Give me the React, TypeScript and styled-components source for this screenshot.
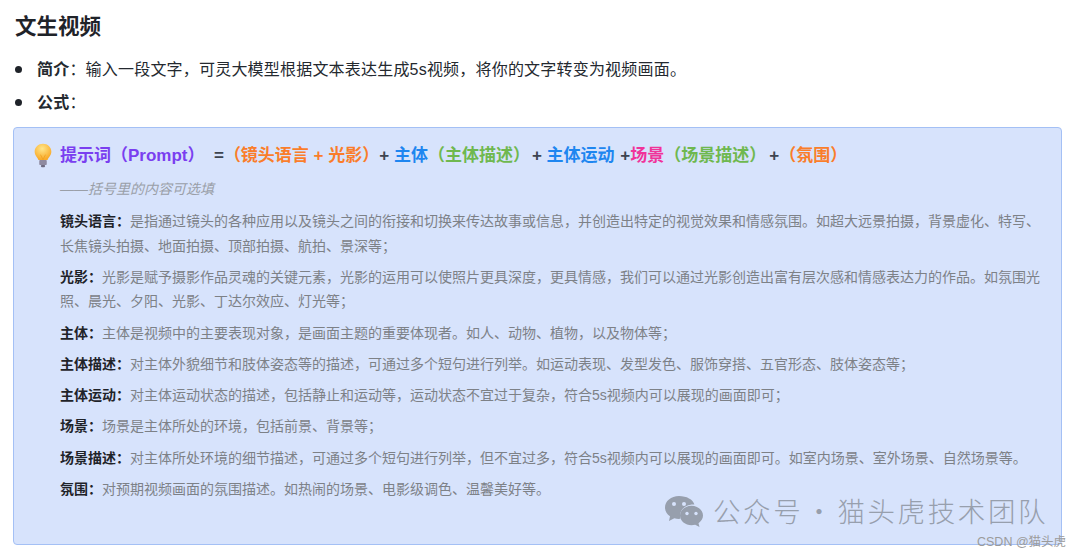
import React from "react";
import styled, { createGlobalStyle } from "styled-components";

const Global = createGlobalStyle`
  html, body { margin: 0; padding: 0; background: #fff; }
  body { font-family: "Liberation Sans", "Noto Sans CJK SC", sans-serif; overflow: hidden; }
`;
const Page = styled.div`
  position: relative; width: 1080px; height: 555px; overflow: hidden; padding: 13px 18px 0 13px; box-sizing: border-box;
`;
const Title = styled.h2`
  margin: 0 0 0 2px; font-size: 21.500px; line-height: 28px; font-weight: 700; color: #1f2329;
`;
const List = styled.ul`
  margin: 12px 0 0; padding: 0; list-style: none;
`;
const Item = styled.li`
  position: relative; padding-left: 24px; font-size: 16px; line-height: 33px; height: 33px; color: #24292f; letter-spacing: 0.2px;
  &::before { content: ""; position: absolute; left: 2px; top: 13px; width: 7px; height: 7px; border-radius: 50%; background: #1f2329; }
  b { font-weight: 700; }
`;
const Callout = styled.section`
  margin-top: 8px; width: 1049px; height: 418px; box-sizing: border-box; background: #d7e3fc; border: 1px solid #a4c0f5; border-radius: 4px;
  padding: 16px 20px 0 46px; position: relative;
`;
const Bulb = styled.svg`
  position: absolute; left: 19px; top: 15px;
`;
const Formula = styled.div`
  font-size: 17px; font-weight: 700; line-height: 24px; color: #3d4450; white-space: pre;
`;
const Tone = styled.span<{ $c: string }>`
  color: ${(p) => p.$c};
`;
const Plus = styled.span<{ $l: number }>`
  margin-left: ${(p) => p.$l}px;
`;
const Note = styled.div`
  margin-top: 10px; font-size: 14px; line-height: 22px; font-style: italic; color: #9a9fa8;
`;
const Para = styled.p`
  margin: 6.800px 0 0; font-size: 14px; line-height: 24.500px; color: #7d8187;
  b { color: #1f2329; font-weight: 700; }
`;
const Lead = styled(Para)`
  margin-top: 9px;
`;
const Mark = styled.div`
  position: absolute; left: 664px; top: 494px; display: flex; align-items: center; gap: 9px;
  font-size: 27.500px; line-height: 36px; letter-spacing: 2.600px; color: #979fad; font-family: "Noto Sans CJK SC", sans-serif; font-weight: 300; white-space: pre;
`;
const MarkText = styled.span`
  position: relative; top: -2px;
`;
const Dot = styled.span`
  margin: 0 2px;
`;
const Credit = styled.div`
  position: absolute; left: 977px; top: 535px; font-size: 12.500px; line-height: 15px; color: #9b9b9b; white-space: pre;
`;

export default function App() {
  return (
    <Page>
      <Global />
      <Title>文生视频</Title>
      <List>
        <Item><b>简介</b>：输入一段文字，可灵大模型根据文本表达生成5s视频，将你的文字转变为视频画面。</Item>
        <Item><b>公式</b>：</Item>
      </List>
      <Callout>
        <Bulb width="20" height="25" viewBox="0 0 24 30">
          <defs>
            <radialGradient id="g" cx="45%" cy="30%" r="65%">
              <stop offset="0%" stopColor="#ffe68a" />
              <stop offset="100%" stopColor="#f9ab2a" />
            </radialGradient>
          </defs>
          <path d="M12 1C6.500 1 2 5 2 10.500c0 4.500 3.500 6.500 4.500 10h11c1-3.500 4.500-5.500 4.500-10C22 5 17.500 1 12 1z" fill="url(#g)" />
          <path d="M9 14l3 6 3-6" fill="none" stroke="#f0a020" strokeWidth="1" />
          <rect x="7.500" y="20.500" width="9" height="6" rx="1" fill="#8f8aa0" />
          <rect x="9.500" y="26.500" width="5" height="2.500" rx="1" fill="#6e6a80" />
        </Bulb>
        <Formula>
          <Tone $c="#7a3ff0">提示词（Prompt）</Tone>
          {"  ="}
          <Tone $c="#fa7d2a">（镜头语言 + 光影）</Tone>
          {"+ "}
          <Tone $c="#1e86f0">主体</Tone>
          <Tone $c="#6fb84f">（主体描述）</Tone>
          <Plus $l={2}>+ </Plus>
          <Tone $c="#1e86f0">主体运动</Tone>
          <Plus $l={1}> +</Plus>
          <Tone $c="#f0339a">场景</Tone>
          <Tone $c="#6fb84f">（场景描述）</Tone>
          <Plus $l={3}>+</Plus>
          <Tone $c="#fa7d2a">（氛围）</Tone>
        </Formula>
        <Note>——括号里的内容可选填</Note>
        <Lead><b>镜头语言：</b>是指通过镜头的各种应用以及镜头之间的衔接和切换来传达故事或信息，并创造出特定的视觉效果和情感氛围。如超大远景拍摄，背景虚化、特写、长焦镜头拍摄、地面拍摄、顶部拍摄、航拍、景深等；</Lead>
        <Para><b>光影：</b>光影是赋予摄影作品灵魂的关键元素，光影的运用可以使照片更具深度，更具情感，我们可以通过光影创造出富有层次感和情感表达力的作品。如氛围光照、晨光、夕阳、光影、丁达尔效应、灯光等；</Para>
        <Para><b>主体：</b>主体是视频中的主要表现对象，是画面主题的重要体现者。如人、动物、植物，以及物体等；</Para>
        <Para><b>主体描述：</b>对主体外貌细节和肢体姿态等的描述，可通过多个短句进行列举。如运动表现、发型发色、服饰穿搭、五官形态、肢体姿态等；</Para>
        <Para><b>主体运动：</b>对主体运动状态的描述，包括静止和运动等，运动状态不宜过于复杂，符合5s视频内可以展现的画面即可；</Para>
        <Para><b>场景：</b>场景是主体所处的环境，包括前景、背景等；</Para>
        <Para><b>场景描述：</b>对主体所处环境的细节描述，可通过多个短句进行列举，但不宜过多，符合5s视频内可以展现的画面即可。如室内场景、室外场景、自然场景等。</Para>
        <Para><b>氛围：</b>对预期视频画面的氛围描述。如热闹的场景、电影级调色、温馨美好等。</Para>
      </Callout>
      <Mark>
        <svg width="40" height="34" viewBox="0 0 40 34">
          <path d="M15 1C7 1 1 6.200 1 12.500c0 3.600 2 6.700 5 8.800L5 26l5.300-2.700c1.500.4 3 .6 4.700.6.500 0 1 0 1.400-.1-.3-1-.4-2-.4-3 0-6.500 6-11.300 13.300-11.300h1.100C29 4.500 22.600 1 15 1z" fill="#979fad" />
          <path d="M39 20.500C39 15 33.600 10.800 27.500 10.800S16 15 16 20.500s5.400 9.700 11.500 9.700c1.300 0 2.500-.2 3.700-.5l4.300 2.300-1-3.800c2.700-2 4.500-4.700 4.500-7.700z" fill="#979fad" />
          <circle cx="10" cy="9" r="2" fill="#d7e3fc" /><circle cx="20" cy="9" r="2" fill="#d7e3fc" />
          <circle cx="23" cy="18.500" r="1.700" fill="#d7e3fc" /><circle cx="32" cy="18.500" r="1.700" fill="#d7e3fc" />
        </svg>
        <MarkText>公众号<Dot>·</Dot>猫头虎技术团队</MarkText>
      </Mark>
      <Credit>CSDN @猫头虎</Credit>
    </Page>
  );
}
